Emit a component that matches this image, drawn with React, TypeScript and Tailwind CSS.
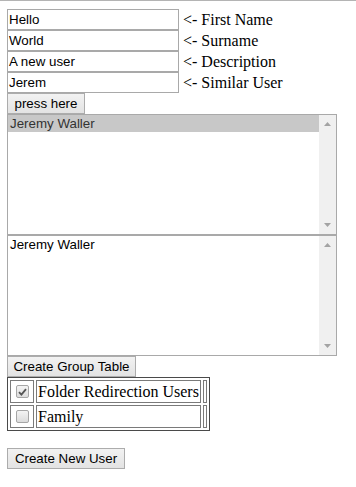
import React from 'react';

const sans = "font-['Liberation_Sans',Arial,sans-serif]";
const serif = "font-['Liberation_Serif','Times_New_Roman',serif]";

function Field({ value, label }: { value: string; label: string }) {
  return (
    <div className="flex items-center h-[21px]">
      <div className={`w-[172px] h-[21px] border border-[#a9a9a9] bg-white px-[1px] text-[13.33px] leading-[19px] text-black ${sans}`}>
        {value}
      </div>
      <span className={`ml-[4px] text-[16px] leading-[19px] text-black ${serif}`}>&lt;- {label}</span>
    </div>
  );
}

function Btn({ children, className = '' }: { children: React.ReactNode; className?: string }) {
  return (
    <div
      className={`flex items-center justify-center whitespace-nowrap h-[21px] border border-[#acacac] bg-gradient-to-b from-[#f2f2f2] to-[#e3e3e3] text-[13.33px] leading-[19px] text-black ${sans} ${className}`}
    >
      {children}
    </div>
  );
}

function Scrollbar() {
  return (
    <div className="w-[17px] bg-[#f0f0f0] flex flex-col justify-between items-center py-[7px]">
      <svg width="7" height="4" viewBox="0 0 7 4">
        <polygon points="3.5,0 7,4 0,4" fill="#a3a3a3" />
      </svg>
      <svg width="7" height="4" viewBox="0 0 7 4">
        <polygon points="0,0 7,0 3.5,4" fill="#a3a3a3" />
      </svg>
    </div>
  );
}

function ListBox({ selected }: { selected?: boolean }) {
  return (
    <div className="w-[330px] h-[121px] border border-[#a9a9a9] flex bg-white">
      <div className={`flex-1 text-[13.33px] leading-[17px] ${sans}`}>
        <div className={`h-[17px] pl-[2px] ${selected ? 'bg-[#c8c8c8] text-[#333]' : 'text-black'}`}>
          Jeremy Waller
        </div>
      </div>
      <Scrollbar />
    </div>
  );
}

function Check({ checked }: { checked?: boolean }) {
  return (
    <div className="w-[13px] h-[13px] rounded-[2px] border border-[#a6a6a6] bg-gradient-to-b from-[#f4f4f4] to-[#dcdcdc] flex items-center justify-center">
      {checked && (
        <svg width="9" height="8" viewBox="0 0 9 8">
          <path d="M1 4.2 L3.4 6.6 L8 1.2" stroke="#555" strokeWidth="1.8" fill="none" />
        </svg>
      )}
    </div>
  );
}

export default function App() {
  const groups = [
    { name: 'Folder Redirection Users', checked: true },
    { name: 'Family', checked: false },
  ];

  return (
    <div className="w-[356px] h-[487px] bg-white border-t border-[#b4b4b4] pl-[7px] pt-[8px] overflow-hidden">
      <Field value="Hello" label="First Name" />
      <Field value="World" label="Surname" />
      <Field value="A new user" label="Description" />
      <Field value="Jerem" label="Similar User" />
      <Btn className="w-[78px]">press here</Btn>
      <ListBox selected />
      <ListBox />
      <Btn className="w-[129px]">Create Group Table</Btn>
      <table className="border-separate border-spacing-[2px] border border-[#4a4a4a]">
        <tbody>
          {groups.map((g) => (
            <tr key={g.name}>
              <td className="w-[24px] h-[23px] border border-[#7a7a7a] p-0">
                <div className="flex justify-center">
                  <Check checked={g.checked} />
                </div>
              </td>
              <td className={`w-[165px] border border-[#7a7a7a] px-[1px] py-0 text-[16px] leading-[19px] whitespace-nowrap text-black ${serif}`}>
                {g.name}
              </td>
              <td className="w-[4px] border border-[#7a7a7a] p-0"></td>
            </tr>
          ))}
        </tbody>
      </table>
      <Btn className="w-[118px] mt-[17px]">Create New User</Btn>
    </div>
  );
}
